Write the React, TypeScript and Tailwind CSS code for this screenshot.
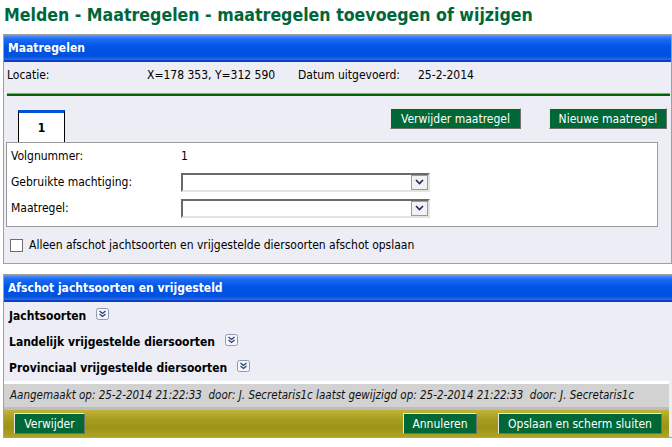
import React from 'react'

const font = "font-['DejaVu_Sans_Condensed','DejaVu_Sans',sans-serif]"

function GreenButton({ label, className = '' }: { label: string; className?: string }) {
  return (
    <button
      className={`h-[21px] bg-[#006837] text-white text-[12px] leading-none px-[7px] border border-t-[#e8e8e8] border-l-[#e8e8e8] border-b-[#707070] border-r-[#707070] ${className}`}
    >
      {label}
    </button>
  )
}

function PanelHeader({ title }: { title: string }) {
  return (
    <>
      <div className="h-[25px] flex items-center pl-[4px] text-white text-[12px] font-bold bg-[linear-gradient(#5c9cff_0%,#1f6cf5_15%,#0056e6_45%,#0050dd_85%,#2b6ee8_100%)]">
        {title}
      </div>
      <div className="h-[2px] bg-[#0a3ec8]" />
    </>
  )
}

function SelectBox() {
  return (
    <div className="w-[249px] h-[19px] flex border-2 border-t-[#6a6a6a] border-l-[#6a6a6a] border-b-[#e4e4e4] border-r-[#e4e4e4] bg-white">
      <div className="flex-1" />
      <div className="w-[17px] h-[15px] bg-[#f2f2f2] border border-[#9a9a9a] flex items-center justify-center">
        <svg width="9" height="6" viewBox="0 0 9 6">
          <path d="M1 1 L4.5 4.5 L8 1" fill="none" stroke="#1a2a5a" strokeWidth="1.6" />
        </svg>
      </div>
    </div>
  )
}

function ExpandIcon() {
  return (
    <svg width="13" height="12" viewBox="0 0 13 12" className="ml-[10px] -mt-[4px]">
      <rect x="0.5" y="0.5" width="12" height="11" rx="2" fill="#f4f6fb" stroke="#8e9aae" />
      <path d="M3.5 3 L6.5 5.5 L9.5 3 M3.5 6 L6.5 8.5 L9.5 6" fill="none" stroke="#2a3f6e" strokeWidth="1.2" />
    </svg>
  )
}

export default function App() {
  return (
    <div className={`w-[672px] h-[447px] bg-white overflow-hidden text-black ${font}`}>
      <h1 className="h-[34px] pl-[4px] pt-[4px] text-[17.6px] font-bold text-[#00663a] leading-[22px]">
        Melden - Maatregelen - maatregelen toevoegen of wijzigen
      </h1>

      <section className="ml-[3px] w-[669px] border border-[#a0a0a0] bg-[#ecedf5]">
        <PanelHeader title="Maatregelen" />
        <div className="h-[26px] flex items-center text-[12px] pl-[3px]">
          <span className="w-[140px]">Locatie:</span>
          <span className="w-[151px]">X=178 353, Y=312 590</span>
          <span className="w-[120px]">Datum uitgevoerd:</span>
          <span>25-2-2014</span>
        </div>
        <div className="mt-[5px] ml-[3px] mr-[1px] border-t border-[#9a9a9a]">
          <div className="h-[2px] bg-[#006600]" />
        </div>

        <div className="h-[46px] flex items-end pl-[14px] pr-[4px]">
          <div className="w-[47px] h-[32px] bg-white border-t-[3px] border-t-[#0052d6] border-x border-x-black flex items-center justify-center text-[12px] font-bold">
            1
          </div>
          <div className="flex-1" />
          <div className="self-start mt-[12px] flex gap-[28px]">
            <GreenButton label="Verwijder maatregel" className="w-[131px]" />
            <GreenButton label="Nieuwe maatregel" className="w-[118px]" />
          </div>
        </div>

        <div className="ml-[2px] w-[652px] bg-white border border-[#9a9a9a] pb-[5px] text-[12px]">
          <div className="h-[26px] flex items-center pl-[4px]">
            <span className="w-[170px]">Volgnummer:</span>
            <span>1</span>
          </div>
          <div className="h-[26px] flex items-center pl-[4px]">
            <span className="w-[170px]">Gebruikte machtiging:</span>
            <SelectBox />
          </div>
          <div className="h-[26px] flex items-center pl-[4px]">
            <span className="w-[170px]">Maatregel:</span>
            <SelectBox />
          </div>
        </div>

        <div className="h-[36px] flex items-center pl-[6px] text-[12px]">
          <div className="w-[13px] h-[13px] bg-white border border-[#6e6e6e] mr-[6px]" />
          <span>Alleen afschot jachtsoorten en vrijgestelde diersoorten afschot opslaan</span>
        </div>
      </section>

      <section className="mt-[10px] ml-[3px] w-[669px] border border-[#a0a0a0] border-r-0 bg-[#ecedf5]">
        <PanelHeader title="Afschot jachtsoorten en vrijgesteld" />
        <div className="pt-[1px] text-[12px] font-bold">
          <div className="h-[26px] flex items-center pl-[5px]">
            <span>Jachtsoorten</span>
            <ExpandIcon />
          </div>
          <div className="h-[26px] flex items-center pl-[5px]">
            <span>Landelijk vrijgestelde diersoorten</span>
            <ExpandIcon />
          </div>
          <div className="h-[26px] flex items-center pl-[5px]">
            <span>Provinciaal vrijgestelde diersoorten</span>
            <ExpandIcon />
          </div>
        </div>
        <div className="h-[3px] bg-white mr-[3px]" />
        <div className="h-[23px] mr-[3px] bg-[#d2d2d2] flex items-center pl-[6px] text-[11.5px] italic text-[#111]">
          Aangemaakt op: 25-2-2014 21:22:33&nbsp; door: J. Secretaris1c laatst gewijzigd op: 25-2-2014 21:22:33&nbsp; door: J. Secretaris1c
        </div>
        <div className="h-[3px] bg-[#bdbdbd] mr-[3px]" />
        <div className="h-[27px] mr-[3px] flex items-center pl-[10px] pr-[7px] bg-[linear-gradient(#c0b53a_0%,#a69c1e_35%,#9d9318_65%,#aea426_100%)]">
          <GreenButton label="Verwijder" className="w-[71px]" />
          <div className="flex-1" />
          <GreenButton label="Annuleren" className="w-[74px]" />
          <GreenButton label="Opslaan en scherm sluiten" className="w-[164px] ml-[21px]" />
        </div>
      </section>
    </div>
  )
}
